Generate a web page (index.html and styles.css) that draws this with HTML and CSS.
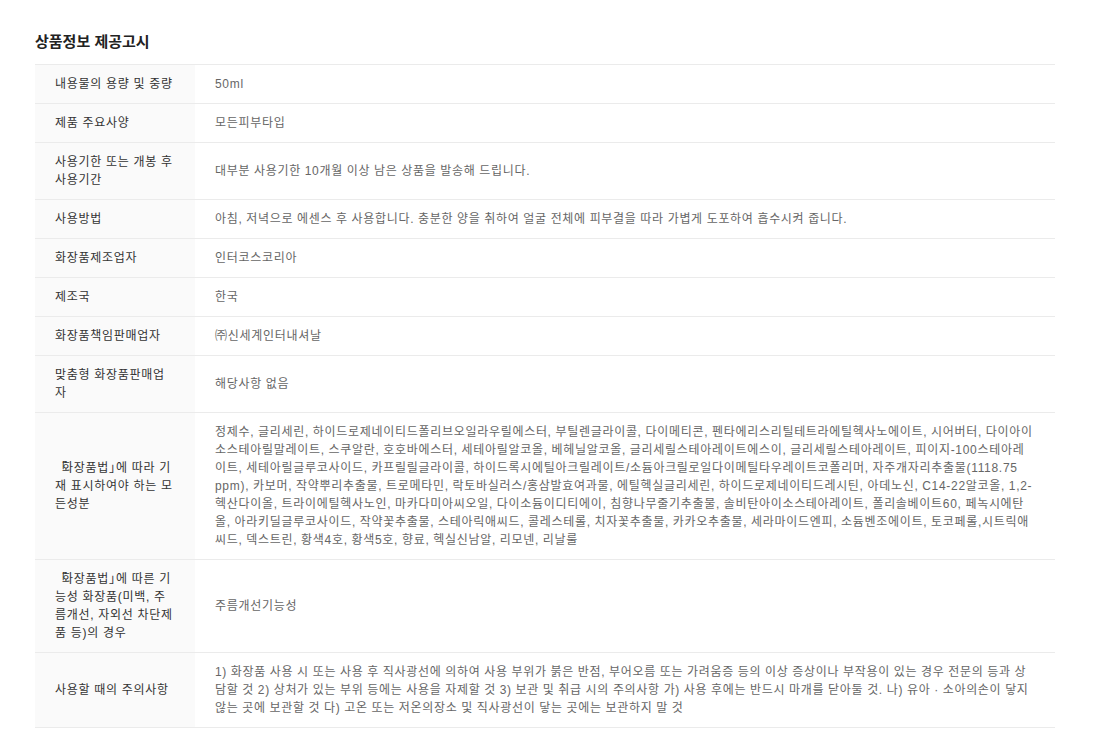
FILE: index.html
```html
<!DOCTYPE html>
<html lang="ko">
<head>
<meta charset="utf-8">
<title>상품정보 제공고시</title>
<link rel="stylesheet" href="styles.css">
</head>
<body>
<section class="notice">
  <h2 class="notice-title">상품정보 제공고시</h2>
  <table class="info-table">
    <colgroup><col class="col-th"><col></colgroup>
    <tbody>
      <tr><th>내용물의 용량 및 중량</th><td>50ml</td></tr>
      <tr><th>제품 주요사양</th><td>모든피부타입</td></tr>
      <tr><th>사용기한 또는 개봉 후 사용기간</th><td>대부분 사용기한 10개월 이상 남은 상품을 발송해 드립니다.</td></tr>
      <tr><th>사용방법</th><td>아침, 저녁으로 에센스 후 사용합니다. 충분한 양을 취하여 얼굴 전체에 피부결을 따라 가볍게 도포하여 흡수시켜 줍니다.</td></tr>
      <tr><th>화장품제조업자</th><td>인터코스코리아</td></tr>
      <tr><th>제조국</th><td>한국</td></tr>
      <tr><th>화장품책임판매업자</th><td>㈜신세계인터내셔날</td></tr>
      <tr><th>맞춤형 화장품판매업자</th><td>해당사항 없음</td></tr>
      <tr><th><span class="br-open">「</span>화장품법<span class="br-close">」</span>에 따라 기재 표시하여야 하는 모든성분</th><td>정제수, 글리세린, 하이드로제네이티드폴리브오일라우릴에스터, 부틸렌글라이콜, 다이메티콘, 펜타에리스리틸테트라에틸헥사노에이트, 시어버터, 다이아이소스테아릴말레이트, 스쿠알란, 호호바에스터, 세테아릴알코올, 베헤닐알코올, 글리세릴스테아레이트에스이, 글리세릴스테아레이트, 피이지-100스테아레이트, 세테아릴글루코사이드, 카프릴릴글라이콜, 하이드록시에틸아크릴레이트/소듐아크릴로일다이메틸타우레이트코폴리머, 자주개자리추출물(1118.75 ppm), 카보머, 작약뿌리추출물, 트로메타민, 락토바실러스/홍삼발효여과물, 에틸헥실글리세린, 하이드로제네이티드레시틴, 아데노신, C14-22알코올, 1,2-헥산다이올, 트라이에틸헥사노인, 마카다미아씨오일, 다이소듐이디티에이, 침향나무줄기추출물, 솔비탄아이소스테아레이트, 폴리솔베이트60, 페녹시에탄올, 아라키딜글루코사이드, 작약꽃추출물, 스테아릭애씨드, 콜레스테롤, 치자꽃추출물, 카카오추출물, 세라마이드엔피, 소듐벤조에이트, 토코페롤,시트릭애씨드, 덱스트린, 황색4호, 황색5호, 향료, 헥실신남알, 리모넨, 리날룰</td></tr>
      <tr><th><span class="br-open">「</span>화장품법<span class="br-close">」</span>에 따른 기능성 화장품(미백, 주름개선, 자외선 차단제품 등)의 경우</th><td>주름개선기능성</td></tr>
      <tr><th>사용할 때의 주의사항</th><td>1) 화장품 사용 시 또는 사용 후 직사광선에 의하여 사용 부위가 붉은 반점, 부어오름 또는 가려움증 등의 이상 증상이나 부작용이 있는 경우 전문의 등과 상담할 것 2) 상처가 있는 부위 등에는 사용을 자제할 것 3) 보관 및 취급 시의 주의사항 가) 사용 후에는 반드시 마개를 닫아둘 것. 나) 유아 · 소아의손이 닿지 않는 곳에 보관할 것 다) 고온 또는 저온의장소 및 직사광선이 닿는 곳에는 보관하지 말 것</td></tr>
    </tbody>
  </table>
</section>
</body>
</html>
```

FILE: styles.css
```css
* { box-sizing: border-box; }
html, body { margin: 0; padding: 0; background: #fff; }
body {
  font-family: "Liberation Sans", "Noto Sans CJK KR", sans-serif;
  font-size: 12px;
  color: #666;
}
.notice {
  padding: 30px 53px 0 35px;
}
.notice-title {
  margin: 0 0 12px;
  font-family: "Noto Sans CJK KR", sans-serif;
  font-size: 15px;
  line-height: 22px;
  font-weight: 700;
  color: #222;
}
.info-table {
  width: 100%;
  border-collapse: collapse;
  table-layout: fixed;
  border-top: 1px solid #ebebeb;
}
.col-th { width: 160px; }
.info-table th,
.info-table td {
  padding: 10px 20px;
  line-height: 18px;
  text-align: left;
  vertical-align: middle;
  border-bottom: 1px solid #ebebeb;
  font-weight: 400;
  letter-spacing: 0.7px;
}
.info-table th {
  background: #fafafa;
  color: #333;
}
.info-table td {
  color: #666;
  word-spacing: -0.25px;
}
.br-open,
.br-close {
  letter-spacing: -5px;
}
```
